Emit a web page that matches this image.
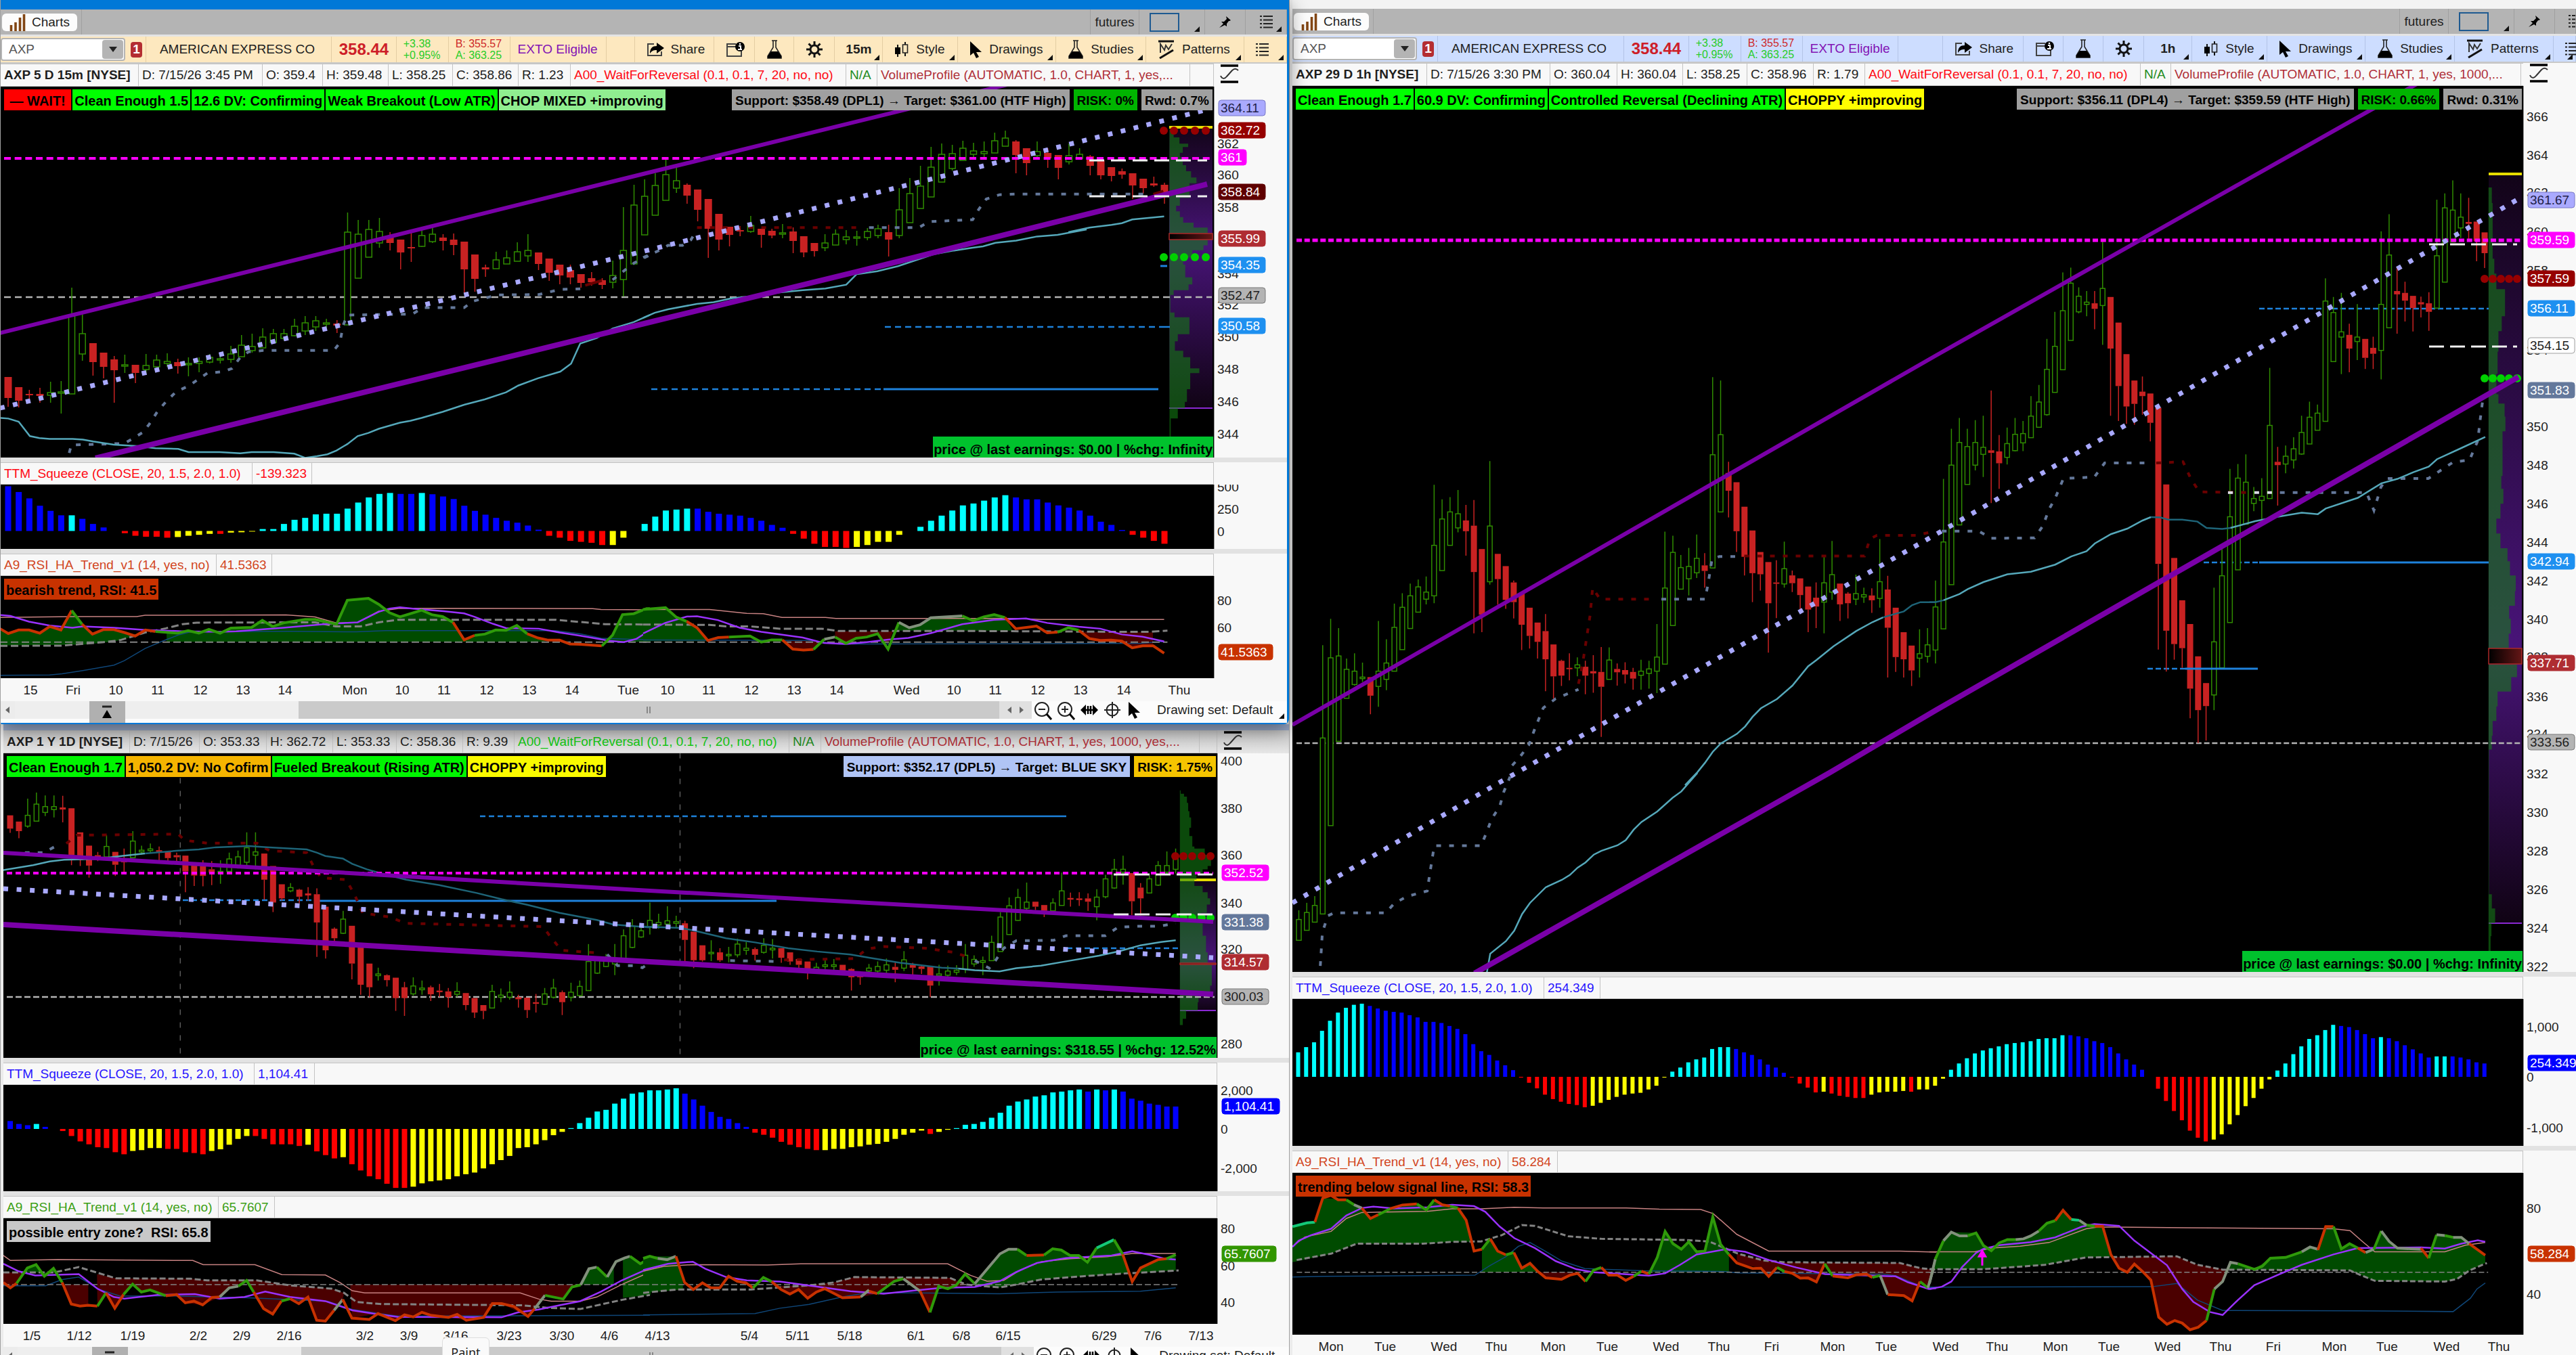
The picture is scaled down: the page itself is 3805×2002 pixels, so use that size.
<!DOCTYPE html>
<html lang="en">
<head>
<meta charset="utf-8">
<title>Charts</title>
<style>
  html, body { margin: 0; height: 100%; overflow: hidden; }
  body { font: 20px "Liberation Sans", Arial, sans-serif; color: #1e1e1e; background: #d9d9d9; }
  .desktop { display: grid; grid-template-columns: 1904fr 1901fr; grid-template-rows: 100%; height: 100%; overflow: hidden; }
  .stack { display: flex; flex-direction: column; min-width: 0; position: relative; z-index: 1; }
  .stack > * { flex: none; }
  chart-window.m15 { --axis: 108px; --tint: #fde8bf; --line: #e3cda3; --title: #0078d7; z-index: 1; border-right: 3px solid #0078d7; border-bottom: 2px solid #0078d7; border-radius: 0 0 8px 4px; box-shadow: 0 8px 28px rgba(0, 0, 0, .45); }
  chart-window.day { --axis: 106px; padding-left: 4px; }
  chart-window.h1 { --axis: 78px; --tint: #cdddff; --line: #b3c3e6; --title: #f3f3f3; padding-left: 4px; }
  .red { color: #ff0a14; }
  .green { color: #14c814; }
  .na { color: #228b22; }
  .brick { color: #b03038; }
  .blue { color: #2814ff; }
  .rust { color: #d2461e; }
  .leaf { color: #3ca014; }
</style>
</head>
<body>
<main class="desktop">
  <div class="stack">
    <chart-window class="m15" full>
      <quote-bar slot="bar" interval="15m" cols="215 274 96 77 91 142 42 118 60 58 60 71 111 145 133 145 63"></quote-bar>
      <study-head tall cols="204 183 89 97 95 97 77 407 46 462 35">
        <b>AXP 5 D 15m [NYSE]</b><span>D: 7/15/26 3:45 PM</span><span>O: 359.4</span><span>H: 359.48</span><span>L: 358.25</span><span>C: 358.86</span><span>R: 1.23</span><span class="red">A00_WaitForReversal (0.1, 0.1, 7, 20, no, no)</span><span class="na">N/A</span><span class="brick">VolumeProfile (AUTOMATIC, 1.0, CHART, 1, yes,...</span><span></span>
      </study-head>
      <plot-pane name="m15-price">
        <study-tag slot="start" color="#ff0000">&nbsp;— WAIT!&nbsp;</study-tag>
        <study-tag slot="start" color="#00ff00">Clean Enough 1.5</study-tag>
        <study-tag slot="start" color="#00ff00">12.6 DV: Confirming</study-tag>
        <study-tag slot="start" color="#00ff00">Weak Breakout (Low ATR)</study-tag>
        <study-tag slot="start" color="#90ee90">CHOP MIXED +improving</study-tag>
        <study-tag slot="end" color="#a0a0a0">Support: $358.49 (DPL1) → Target: $361.00 (HTF High)</study-tag>
        <study-tag slot="end" color="#00b400">RISK: 0%</study-tag>
        <study-tag slot="end" color="#a0a0a0">Rwd: 0.7%</study-tag>
        <study-tag slot="foot" color="#00c22d">price @ last earnings: $0.00 | %chg: Infinity</study-tag>
      </plot-pane>
      <study-head gap cols="372 88 1332"><span class="red">TTM_Squeeze (CLOSE, 20, 1.5, 2.0, 1.0)</span><span class="red">-139.323</span><span></span></study-head>
      <plot-pane name="m15-squeeze"></plot-pane>
      <study-head gap cols="319 82 1391"><span class="rust">A9_RSI_HA_Trend_v1 (14, yes, no)</span><span class="rust">41.5363</span><span></span></study-head>
      <plot-pane name="m15-rsi"><study-tag slot="start" color="#c83200">bearish trend, RSI: 41.5</study-tag></plot-pane>
      <time-axis name="m15"></time-axis>
      <scroll-strip></scroll-strip>
    </chart-window>

    <chart-window class="day">
      <study-head tall shade cols="187 103 99 98 94 98 76 406 47 559 26">
        <b>AXP 1 Y 1D [NYSE]</b><span>D: 7/15/26</span><span>O: 353.33</span><span>H: 362.72</span><span>L: 353.33</span><span>C: 358.36</span><span>R: 9.39</span><span class="green">A00_WaitForReversal (0.1, 0.1, 7, 20, no, no)</span><span class="na">N/A</span><span class="brick">VolumeProfile (AUTOMATIC, 1.0, CHART, 1, yes, 1000, yes,...</span><span></span>
      </study-head>
      <plot-pane name="day-price">
        <study-tag slot="start" color="#00f500">Clean Enough 1.7</study-tag>
        <study-tag slot="start" color="#f5b400">1,050.2 DV: No Cofirm</study-tag>
        <study-tag slot="start" color="#00f500">Fueled Breakout (Rising ATR)</study-tag>
        <study-tag slot="start" color="#fafa00">CHOPPY +improving</study-tag>
        <study-tag slot="end" color="#b0c4f5">Support: $352.17 (DPL5) → Target: BLUE SKY</study-tag>
        <study-tag slot="end" color="#f5c400">RISK: 1.75%</study-tag>
        <study-tag slot="foot" color="#00c22d">price @ last earnings: $318.55 | %chg: 12.52%</study-tag>
      </plot-pane>
      <study-head gap cols="371 89 1333"><span class="blue">TTM_Squeeze (CLOSE, 20, 1.5, 2.0, 1.0)</span><span class="blue">1,104.41</span><span></span></study-head>
      <plot-pane name="day-squeeze"></plot-pane>
      <study-head gap cols="318 83 1392"><span class="leaf">A9_RSI_HA_Trend_v1 (14, yes, no)</span><span class="leaf">65.7607</span><span></span></study-head>
      <plot-pane name="day-rsi"><study-tag slot="start" color="#c8c8c8">possible entry zone?&nbsp; RSI: 65.8</study-tag></plot-pane>
      <time-axis name="day"></time-axis>
      <scroll-strip hint="Paint"></scroll-strip>
    </chart-window>
  </div>

  <chart-window class="h1" full>
    <quote-bar slot="bar" interval="1h" cols="215 275 96 77 91 141 67 119 59 59 60 71 111 145 132 146 33"></quote-bar>
    <study-head tall cols="199 182 99 97 95 98 76 407 45 517 3">
      <b>AXP 29 D 1h [NYSE]</b><span>D: 7/15/26 3:30 PM</span><span>O: 360.04</span><span>H: 360.04</span><span>L: 358.25</span><span>C: 358.96</span><span>R: 1.79</span><span class="red">A00_WaitForReversal (0.1, 0.1, 7, 20, no, no)</span><span class="na">N/A</span><span class="brick">VolumeProfile (AUTOMATIC, 1.0, CHART, 1, yes, 1000,...</span><span></span>
    </study-head>
    <plot-pane name="h1-price">
      <study-tag slot="start" color="#00ff00">Clean Enough 1.7</study-tag>
      <study-tag slot="start" color="#00ff00">60.9 DV: Confirming</study-tag>
      <study-tag slot="start" color="#00ff00">Controlled Reversal (Declining ATR)</study-tag>
      <study-tag slot="start" color="#ffff00">CHOPPY +improving</study-tag>
      <study-tag slot="end" color="#a0a0a0">Support: $356.11 (DPL4) → Target: $359.59 (HTF High)</study-tag>
      <study-tag slot="end" color="#00b400">RISK: 0.66%</study-tag>
      <study-tag slot="end" color="#a0a0a0">Rwd: 0.31%</study-tag>
      <study-tag slot="foot" color="#00c22d">price @ last earnings: $0.00 | %chg: Infinity</study-tag>
    </plot-pane>
    <study-head gap cols="372 83 1363"><span class="blue">TTM_Squeeze (CLOSE, 20, 1.5, 2.0, 1.0)</span><span class="blue">254.349</span><span></span></study-head>
    <plot-pane name="h1-squeeze"></plot-pane>
    <study-head gap cols="319 73 1426"><span class="rust">A9_RSI_HA_Trend_v1 (14, yes, no)</span><span class="rust">58.284</span><span></span></study-head>
    <plot-pane name="h1-rsi"><study-tag slot="start" color="#c83200">trending below signal line, RSI: 58.3</study-tag></plot-pane>
    <time-axis name="h1"></time-axis>
  </chart-window>
</main>

<script>
const COLORS = {
  o: '#c83200', g: '#2f9a0a', s: '#82907c', t: '#14c878',
  b: '#0000ff', c: '#00ffff', r: '#ff0000', y: '#ffff00',
  purple: '#7a00a8', violet: '#9a32ff', lilac: '#a9a9ff', slate: '#64789a', maroon: '#690000',
  sea: '#55a8ba', teal: '#1e6478', sky: '#1e82dc', navy: '#0f4678', pink: '#c88282'
};

const icons = {
  share: '<svg width="26" height="24" viewBox="0 0 26 24"><path d="M11 4H2v17h20v-6" fill="none" stroke="#444" stroke-width="2"/><path d="M5 18c0-8 4-11 10-11V2l11 8-11 8v-5c-5 0-7 1-10 5z"/></svg>',
  info: '<svg width="28" height="24" viewBox="0 0 28 24"><path d="M15 4H2v18h21v-8M2 8h13" fill="none" stroke="#444" stroke-width="2"/><circle cx="21" cy="8" r="7"/><path d="M19 7h3v5M18 12h6" fill="none" stroke="#fff" stroke-width="2"/><circle cx="21" cy="4" r="1.3" fill="#fff"/></svg>',
  flask: '<svg width="24" height="28" viewBox="0 0 24 28"><path d="M8 1h8M10 1v10L2 24v3h20v-3L14 11V1" fill="none" stroke="#222" stroke-width="1.6"/><path d="M7 17h10l5 7v3H2v-3z"/></svg>',
  gear: '<svg width="26" height="26" viewBox="0 0 26 26"><circle cx="13" cy="13" r="6" fill="none" stroke="#111" stroke-width="3"/><path d="M13 1v5M13 20v5M1 13h5M20 13h5M4.500 4.500l3.500 3.500M18 18l3.500 3.500M4.500 21.500L8 18M18 8l3.500-3.500" stroke="#111" stroke-width="3"/></svg>',
  style: '<svg width="22" height="24" viewBox="0 0 22 24"><path d="M5 5v18M16 1v21" stroke="#111" stroke-width="2"/><path d="M1 9h8v10H1z"/><path d="M12.500 5h7v12h-7z" fill="var(--tint)" stroke="#222" stroke-width="1.600"/></svg>',
  cursor: '<svg width="19" height="25" viewBox="0 0 19 25"><path d="M1 0v21l5-4 4 8 4-2-4-7h8z"/></svg>',
  pattern: '<svg width="26" height="28" viewBox="0 0 26 28"><path d="M1 2h23" stroke="#111" stroke-width="3"/><path d="M4 19V6l6 9 2-7 4 6 5-8" fill="none" stroke="#333" stroke-width="2"/><path d="M3 27l20-12" stroke="#111" stroke-width="3"/></svg>',
  list: '<svg width="19" height="21" viewBox="0 0 19 21"><path d="M5 2h14M5 7.500h14M5 13h14M5 18.500h14" stroke="#222" stroke-width="2"/><path d="M0 2h3M0 7.500h3M0 13h3M0 18.500h3" stroke="#222" stroke-width="2"/></svg>',
  pin: '<svg width="17" height="17" viewBox="0 0 17 17"><path d="M10 0l7 6-2 1-1 0-3 4v4l-3-2-8 4 6-6-3-3 4 0 4-4z"/></svg>',
  wave: '<svg width="28" height="28" viewBox="0 0 28 28"><path d="M1 2h26M1 26h26" stroke="#000" stroke-width="3.500"/><path d="M1 17c2 5 6 5 9 1l8-9c3-3 6-3 9 0" fill="none" stroke="#333" stroke-width="2"/></svg>',
  minus: '<svg width="28" height="30" viewBox="0 0 28 30"><circle cx="12" cy="14" r="10" fill="none" stroke="#222" stroke-width="2"/><path d="M7 14h10" stroke="#222" stroke-width="2"/><path d="M19 21l7 8" stroke="#000" stroke-width="3"/></svg>',
  plus: '<svg width="28" height="30" viewBox="0 0 28 30"><circle cx="12" cy="14" r="10" fill="none" stroke="#222" stroke-width="2"/><path d="M7 14h10M12 9v10" stroke="#222" stroke-width="2"/><path d="M19 21l7 8" stroke="#000" stroke-width="3"/></svg>',
  fit: '<svg width="26" height="18" viewBox="0 0 26 18"><path d="M0 9l8-8v16zM26 9l-8-8v16z"/><path d="M6 9h14M11 3v12M15 3v12" stroke="#000" stroke-width="2.500"/></svg>',
  cross: '<svg width="24" height="24" viewBox="0 0 24 24"><circle cx="12" cy="12" r="8.500" fill="none" stroke="#222" stroke-width="2"/><path d="M12 0v24M0 12h24" stroke="#222" stroke-width="2"/></svg>',
  bars: '<svg width="24" height="26" viewBox="0 0 24 26"><path d="M2.500 26v-9M9 26V13M15.500 26V6M21.500 26V1" stroke="#824614" stroke-width="3.600"/></svg>'
};

// ---- drawing helpers -------------------------------------------------

const line = (color, width, points, dash = '') =>
  `<polyline points="${points}" stroke="${COLORS[color] || color}" stroke-width="${width}" stroke-dasharray="${dash}"/>`;

const fill = (color, points) => `<polygon points="${points}" fill="${color}"/>`;
const UP = '#004b00';
const DOWN = '#4b0000';

// a zone is a part of a plot with its own origin and scale
const zone = (x, y, kx, ky) => (...items) =>
  `<g transform="translate(${x} ${y}) scale(${kx} ${ky})">${items.join('')}</g>`;

// each bar is direction + high, body top, body bottom, low
function candles(x0, step, y0, k, width, data) {
  return data.trim().split(/\s+/).map((bar, i) => {
    const up = bar[0] === 'u';
    const [h, t, b, l] = bar.slice(1).split(',').map(v => y0 + v * k);
    const x = x0 + i * step;
    const color = up ? '#2f8c00' : '#c82222';
    const w = up ? width - 2 : width;
    return `<path d="M${x} ${h}V${t}M${x} ${b}V${l}" stroke="${color}" stroke-width="1.5"/>` +
      `<rect x="${x - w / 2}" y="${t}" width="${w}" height="${Math.max(b - t, 2)}" fill="${up ? '#000' : color}"` +
      (up ? ` stroke="${color}" stroke-width="1.5"/>` : '/>');
  }).join('');
}

function histogram(x0, step, zero, k, width, data) {
  let i = 0;
  return data.split('|').map(run => run.slice(1).split(',').map(v => {
    const h = Math.abs(v) * k;
    const x = x0 + step * i++ - width / 2;
    return `<rect x="${x}" y="${v > 0 ? zero - h : zero}" width="${width}" height="${h}" fill="${COLORS[run[0]]}"/>`;
  }).join('')).join('');
}

// "g 1,2 3,4|o 3,4 5,6": one stroke per colour run
const runs = (data, width) => data.split('|').map(r => line(r.trim()[0], width, r.trim().slice(2))).join('');

const dots = (color, y, xs) => xs.map(x => `<circle cx="${x}" cy="${y}" r="6" fill="${color}"/>`).join('');

// volume profile: steps are "y:right edge", drawn from the left base line
function profile(base, k, x0, y0, ky, end, data) {
  const X = v => x0 + v * k, Y = v => y0 + v * ky;
  const steps = data.split(' ').map(s => s.split(':').map(Number));
  let d = `M${X(base)} ${Y(steps[0][0])}`;
  steps.forEach(([y, x], i) => { d += `V${Y(y)}H${X(x)}V${Y(i + 1 < steps.length ? steps[i + 1][0] : end)}`; });
  return `<path d="${d}H${X(base)}z" fill="#148214" fill-opacity=".56"/>`;
}

const valueArea = (id, x, y, w, h, mid) =>
  `<linearGradient id="${id}" x1="0" y1="0" x2="0" y2="1"><stop offset="0" stop-color="#120418"/><stop offset="${mid}" stop-color="#481478"/><stop offset="1" stop-color="#100314"/></linearGradient>` +
  `<linearGradient id="${id}r"><stop offset="0" stop-color="#000"/><stop offset="1" stop-color="#641616"/></linearGradient>` +
  `<rect x="${x}" y="${y}" width="${w}" height="${h}" fill="url(#${id})"/>` +
  `<path d="M${x} ${y}h${w}" stroke="#e6dc00" stroke-width="4"/><path d="M${x} ${y + h}h${w}" stroke="#8a28d2" stroke-width="2"/>`;

const control = (id, x, y, w, h) =>
  `<rect x="${x}" y="${y}" width="${w}" height="${h}" fill="url(#${id}r)" stroke="#aa2828" stroke-width="1.500"/>`;

// ---- the three charts ------------------------------------------------

const a1 = zone(950, 0, .6122, .33333);
const a2 = zone(0, 340, .6122, .4719);
const a3 = zone(950, 340, .6122, .4719);
const b1 = zone(0, 1040, .6122, .6135);
const b2 = zone(950, 1040, .6122, .6135);
const c1 = zone(1900, 300, .6122, .5485);
const c2 = zone(2850, 300, .609, .5485);
const c3 = zone(1900, 1142, .6122, .5485);
const c4 = zone(2850, 1142, .609, .5485);

const DOT = '7 12';

const panes = {
  'm15-price': {
    box: [1, 129, 1792, 548],
    draw: () =>
      valueArea('va', 1727, 189, 64, 415, .42) +
      profile(1270, .6122, 950, 0, .33333, 1038, '575:1280 612:1294 640:1315 655:1302 680:1295 700:1310 715:1302 735:1310 762:1322 790:1335 815:1318 880:1295 915:1286 940:1295 965:1303 990:1328 1012:1362') +
      profile(1270, .6122, 950, 340, .4719, 650, '32:1362 50:1352 65:1325 88:1303 110:1308 150:1325 172:1316 190:1280 205:1272 260:1282 275:1318 328:1290 350:1283 380:1303 400:1320 435:1342 450:1320 500:1312 540:1307 560:1290 592:1273') +
      control('va', 1727, 346, 64, 9) +
      line('#b4b4b4', 2.500, '6,440 1790,440', '10 6') +
      line('sky', 2.500, '1307,484 1712,484', '9 6') + line('sky', 2.500, '1712,484 1728,484') +
      line('sky', 2.500, '962,576 1305,576', '9 6') + line('sky', 3, '1305,576 1711,576') + line('sky', 3, '1714,394 1724,394') +
      candles(12, 15.67, 0, 1, 11, `
        d558,558,589,602 d573,573,593,603 d577,583,585,591 d574,583,586,596 u565,581,585,596 u564,580,582,612 u426,466,583,583 u466,494,524,534 d508,508,536,556 d522,522,543,560
        d527,532,548,596 u525,540,541,552 d540,540,552,567 u524,541,547,552 u525,533,543,548 u523,535,538,543 d531,536,542,553 u529,538,540,557 u529,535,538,551 u524,529,536,538
        u522,531,532,538 u512,524,532,537 u496,511,528,528 u494,513,519,522 u486,499,515,515 u487,494,507,507 u487,494,501,504 u472,483,497,498 u468,478,490,496 u468,475,484,490
        u472,478,480,489 d474,479,482,493 u315,344,481,481 u326,347,412,412 u326,340,381,381 u323,343,360,367 d344,350,360,371 d355,355,374,399 d344,366,367,388 u340,349,365,366
        u337,347,358,360 d347,352,357,371 d346,355,363,378 d358,358,399,434 d377,377,413,432 d392,396,399,410 u373,385,398,398 u371,382,391,391 u359,373,387,387 u347,371,379,388
        d374,374,391,400 d383,383,404,416 d392,392,408,421 d392,400,411,421 d406,406,419,426 d403,412,418,423 d412,415,422,428 u386,408,418,427 u307,371,414,439 u274,304,391,391
        u266,291,348,348 u257,275,319,319 u237,259,297,297 u247,268,279,286 d272,274,290,302 d281,281,311,328 d295,295,339,382 d317,317,355,371 d336,336,348,365 d335,341,343,350
        u320,334,343,345 d339,339,348,367 d339,342,349,353 u332,345,347,353 d337,343,357,375 d350,350,374,381 d360,360,372,380 u347,360,367,372 u340,347,363,363 u341,351,355,362
        u342,351,353,364 u338,343,352,356 u333,339,349,353 d333,344,355,380 u279,311,349,353 u264,287,330,330 u246,276,309,309 u218,248,292,292 u213,229,270,270 u215,228,250,253
        u209,220,238,238 u212,224,229,235 u210,225,228,237 u197,209,227,227 u194,205,217,217 d208,210,230,257 d220,220,242,260 u210,225,231,235 d220,227,235,249 d230,230,249,266
        u213,231,240,244 u220,229,235,235 d230,232,246,260 d238,238,260,266 d248,248,261,269 d250,254,259,265 d257,257,275,295 d265,265,279,287 d262,272,275,277 d271,274,287,302`) +
      a2(
        line('slate', 4, '167,700 172,675 300,670 320,655 345,635 360,610 380,570 400,540 425,508 455,490 500,450 540,445 560,435 580,400 600,383 635,379 805,379 820,355 828,300 838,268 995,265 1020,245 1120,245 1140,225 1200,205 1300,204 1350,188 1400,186', DOT),
        line('maroon', 4, '1412,175 1452,160'),
        line('slate', 4, '1478,158 1505,130 1530,105 1568,80', DOT),
        line('sea', 2.500, '0,590 20,592 45,602 72,647 95,653 120,656 175,656 200,658 225,664 275,674 330,678 375,685 430,687 455,697 530,697 580,701 607,697 660,697 710,702 736,715 765,710 790,704 812,692 838,672 863,647 889,637 914,624 965,605 990,599 1017,590 1068,571 1120,549 1170,532 1221,510 1250,489 1298,466 1352,445 1378,420 1400,357 1440,340 1478,310 1529,290 1568,268')) +
      a3(
        line('slate', 4, '0,88 40,65 60,50 95,50 115,33 130,0', DOT),
        line('sea', 2.500, '0,277 28,261 60,250 130,233 170,228 215,215 260,210 330,197 385,190 440,185 490,173 515,140 565,131 615,115 700,78 750,66 795,57 820,53 850,42 900,35 950,22 1000,17 1070,0')) +
      a1(
        line('maroon', 4, '130,1012 530,1012', DOT),
        line('slate', 4, '545,1012 665,1012 690,985 795,977 810,930 828,885 860,866 900,863 1215,863', DOT),
        line('maroon', 4, '1231,864 1255,850'),
        line('sea', 2.500, '1026,1032 1077,1012 1130,1000 1155,992 1180,976 1257,962')) +
      line('#ff00ff', 4, '6,235 1790,235', '10 5.670') +
      line('purple', 6, '0,493 950,258 1488,126') +
      line('purple', 8, '141,678 960,477 1300,394 1783,273') +
      line('lilac', 7, '0,604 960,370 1783,163', '7 12.600') +
      line('#f0f0f0', 3, '1609,238 1783,238', '22 10') + line('#f0f0f0', 3, '1609,291 1783,291', '22 10') +
      dots('#960000', 194, [1719, 1734, 1749, 1765, 1781]) + dots('#00d200', 381, [1719, 1734, 1749, 1765, 1781]),
    ticks: [['362', 213], ['360', 259], ['358', 307], ['354', 405], ['352', 451], ['350', 498], ['348', 546], ['346', 594], ['344', 642]],
    pills: [['364.11', 160, '#aaaaff', '#1e1e46', '#7878c8'], ['362.72', 193, '#960000'], ['361', 233, '#ff00ff'], ['358.84', 284, '#5f0000'], ['355.99', 353, '#af2d32'], ['354.35', 392, '#1e90f0'], ['352.47', 437, '#b4b4b4', '#1e1e1e', '#787878'], ['350.58', 482, '#1e90f0']]
  },
  'm15-squeeze': {
    box: [1, 717, 1792, 95],
    draw: () => histogram(12, 15.67, 785.500, .4719, 9, 'b140,122,102,79,63,49|c49|b38,22,11,0|r-7,-15,-18,-18,-21|y-19,-15,-12,-9|r-9|y-5,-4,-2|c6,6,22,35,41,52,54,54,70,89,105,116,119|b116,116|c119|b115,108,100,79,63,51,41,32,26,17,4|r-15,-21,-31,-34,-37,-44|y-44,-21,0|c22,45,64,67,70|b70,60,54,51,48,41,32,19,10|r-9,-24,-40,-50,-50,-53|y-50,-44,-34,-34,-12,0|c13,32,48,64,80,86,95,105,112|b105,99,99,89,80,73,64,48,29,19,3|r-12,-21,-31,-40'),
    ticks: [['500', 720], ['250', 753], ['0', 786]], pills: []
  },
  'm15-rsi': {
    box: [1, 852, 1792, 151],
    draw: () =>
      a2(
        fill(UP, '0,1250 20,1265 45,1254 70,1254 96,1264 120,1243 147,1254 173,1193 198,1236 223,1267 249,1253 275,1253 300,1262 326,1273 275,1290 200,1300 0,1303'),
        fill(UP, '402,1262 429,1264 454,1256 480,1264 504,1252 531,1264 557,1248 607,1246 633,1224 658,1243 684,1232 736,1221 761,1221 812,1236 838,1161 889,1155 914,1174 940,1200 965,1213 1017,1192 1042,1206 1068,1212 1093,1230 1120,1285 1120,1291 402,1291'),
        fill(UP, '1120,1285 1145,1271 1196,1254 1221,1255 1247,1240 1272,1266 1298,1279 1323,1286 1310,1291 1120,1291'),
        fill(UP, '1465,1291 1478,1270 1502,1206 1529,1203 1560,1187 1570,1187 1570,1291'),
        line('pink', 1.500, '0,1215 180,1212 330,1212 350,1208 690,1207 760,1213 812,1232 863,1230 914,1195 965,1186 1430,1187 1450,1190 1568,1191'),
        line('navy', 1.500, '0,1396 120,1395 150,1391 200,1381 275,1364 300,1350 350,1312 390,1290 430,1270 460,1260 700,1258 860,1260 930,1256 1340,1256 1400,1266 1450,1280 1568,1285'),
        line('#828282', 3, '0,1304 150,1303 250,1292 290,1286 350,1262 400,1249 440,1236 475,1231 760,1230 810,1243 870,1243 914,1230 960,1222 1340,1222 1400,1229 1460,1236 1568,1237', '11 5'),
        line('#828282', 2, '0,1292 1568,1292', '11 5'),
        line('violet', 2.500, '0,1207 25,1210 70,1228 120,1240 175,1247 200,1243 275,1247 350,1254 440,1258 530,1260 570,1258 684,1247 790,1235 863,1230 914,1197 940,1187 965,1183 1000,1188 1070,1195 1120,1202 1145,1213 1190,1235 1221,1248 1300,1250 1350,1262 1400,1272 1470,1288 1505,1292 1535,1282 1568,1255'),
        runs('o 0,1250 20,1265 45,1254 70,1254 96,1264 120,1243 147,1254 173,1193|g 173,1193 198,1236|o 198,1236 223,1267 249,1253 275,1253 300,1262 326,1273 351,1254 375,1259|g 375,1259 429,1264 454,1256 480,1264 504,1252 531,1264 557,1248 607,1246 633,1224 658,1243 684,1232 736,1221 761,1221 812,1236 838,1161 889,1155 914,1174 940,1200 965,1213 1017,1192 1042,1206 1068,1212 1093,1230|o 1093,1230 1120,1285 1145,1271|g 1145,1271 1170,1267 1196,1254 1221,1255 1247,1240 1272,1266|o 1272,1266 1298,1279 1323,1286 1350,1286 1375,1298 1401,1299 1452,1304|g 1452,1304 1478,1270 1502,1206 1529,1203 1560,1187 1568,1187', 4)) +
      a3(
        fill(UP, '0,1190 54,1184 80,1214 105,1227 130,1247 156,1289 0,1289'),
        fill(DOWN, '340,1289 361,1314 387,1317 411,1315 435,1289'),
        fill(DOWN, '463,1258 603,1258 591,1300 566,1268 540,1278 514,1282 489,1296 463,1276'),
        fill(UP, '617,1230 642,1247 668,1238 694,1216 770,1210 796,1225 822,1213 847,1206 873,1215 892,1256 612,1256'),
        fill(DOWN, '1055,1260 1230,1262 1230,1302 1205,1304 1180,1310 1155,1289 1103,1287 1077,1281'),
        line('pink', 1.500, '0,1190 160,1190 250,1202 290,1203 335,1215 440,1215 465,1218 900,1218 960,1221 1257,1221'),
        line('navy', 1.500, '0,1285 400,1287 470,1298 1200,1296 1257,1290'),
        line('#828282', 3, '0,1237 160,1238 200,1243 260,1243 330,1250 430,1250 470,1257 770,1257 1170,1260 1220,1260 1265,1256', '11 5'),
        line('#828282', 2, '0,1292 1265,1292', '11 5'),
        line('violet', 2.500, '0,1265 53,1232 105,1212 130,1211 180,1223 233,1247 285,1260 335,1269 385,1278 437,1295 489,1298 540,1292 591,1284 640,1279 694,1264 770,1236 847,1222 924,1218 975,1232 1051,1244 1103,1250 1155,1268 1205,1275 1257,1290'),
        runs('g 0,1190 54,1184 80,1214 105,1227|o 105,1227 130,1247 156,1287 181,1278 207,1276|g 207,1276 258,1273 285,1292 310,1285 336,1285|o 336,1285 361,1314 387,1317 411,1315|g 411,1315 437,1283|s 437,1283 463,1276|g 463,1276 489,1296 514,1280 540,1276 566,1266 591,1314 617,1230|s 617,1230 642,1247 668,1238 694,1216 770,1210|g 770,1210 796,1225 822,1213 847,1206 873,1215|o 873,1215 899,1250 949,1242 975,1263 1000,1261|g 1000,1261 1026,1247 1051,1255|o 1051,1255 1077,1281 1103,1287 1129,1286 1155,1289 1180,1310 1205,1304 1231,1304 1257,1327', 4)),
    ticks: [['80', 888], ['60', 928]], pills: [['41.5363', 964, '#c83200']]
  },

  'day-price': {
    box: [5, 1114, 1793, 450],
    draw: () =>
      valueArea('vb', 1743, 1301, 53, 193, .62) +
      profile(1295, .6122, 950, 1040, .6135, 775, '210:1297 218:1305 225:1312 240:1315 260:1318 275:1322 300:1318 320:1325 345:1330 350:1355 365:1370 385:1370 392:1362 400:1350 410:1335 425:1330 440:1350 455:1362 470:1368 485:1360 505:1345 530:1350 560:1358 600:1362 630:1372 660:1372 680:1368 700:1340 720:1338 740:1310 760:1302') +
      control('vb', 1743, 1424, 53, 2) +
      b1(line('#5a5a5a', 1.500, '435,180 435,854', '8 11')) + b2(line('#5a5a5a', 1.500, '89,120 89,854', '8 11')) +
      line('#b4b4b4', 2.500, '10,1474 1794,1474', '9 4') +
      line('sky', 2.500, '709,1207 1146,1207', '8 5') + line('sky', 2.500, '1146,1207 1575,1207') +
      line('sky', 2.500, '270,1331 472,1331', '8 5') + line('sky', 3, '472,1332 1147,1332') +
      line('sky', 2.500, '1576,1402 1742,1402', '8 5') +
      candles(15, 12.944, 1040, .6135, 9, `
        d270,270,302,312 d285,285,308,325 u230,270,296,300 u215,243,284,284 u222,249,263,272 u222,249,256,275 d223,251,256,287 d253,253,366,390 d311,311,378,392 d343,343,391,420
        d358,366,378,380 u318,345,370,376 d358,358,389,416 d350,380,383,410 u308,332,372,372 u343,354,358,365 u338,351,355,362 d345,354,358,378 d358,358,373,383 d360,366,371,383
        d367,367,405,455 d388,388,415,440 d378,392,416,441 d380,400,408,438 u378,405,410,435 u360,375,405,412 u355,370,390,398 u311,348,383,390 u311,358,366,400 d362,362,425,473
        d392,392,480,503 d436,436,470,475 u433,444,452,455 d447,449,466,482 d443,458,463,475 d446,460,528,611 d490,490,595,615 d540,543,566,575 u500,520,554,556 d536,536,627,665
        d586,586,678,702 d627,627,684,708 u637,652,656,668 d653,655,667,682 d661,661,710,741 d671,684,710,753 u660,681,700,704 u668,686,690,702 d680,684,701,717 d676,692,696,708
        d686,694,708,733 u672,694,701,708 d698,698,727,739 d710,710,745,758 d727,727,741,761 u678,694,734,735 u687,703,708,720 u670,696,708,714 d702,708,713,733 d709,709,739,758
        d700,720,724,745 u686,700,725,726 u664,686,708,711 d692,696,720,751 u673,696,708,718 u668,682,704,706 u580,622,692,692 u612,614,650,652 u604,616,634,635 u580,614,628,655
        u545,560,615,616 u520,537,588,590 u530,548,563,565 u480,523,540,557 u507,528,534,543 u489,524,532,540 u512,526,530,540 d524,530,570,621 d550,550,619,638 d583,583,619,622
        u571,600,603,621 d590,600,619,623 u587,605,608,624 u567,580,606,612 u575,590,595,606 d588,592,606,620 u566,583,600,603 u568,590,594,615 d590,590,613,625 d600,600,622,630
        d616,616,630,640 d622,622,640,665 u625,636,641,646 u618,630,634,640 u616,630,634,645 d630,630,645,652 d638,640,660,692 d650,655,660,678 u628,638,645,650 u622,634,645,652
        u615,630,643,650 d623,635,642,672 u597,618,638,645 d625,630,637,658 d630,634,640,652 d633,633,680,708 u630,652,656,680 u632,645,655,662 u631,643,648,655 u580,607,641,650
        u607,617,628,635 u610,620,624,655 u560,576,620,621 u503,515,598,598 u468,488,557,558 u447,468,523,524 u432,479,494,500 d478,478,490,498 d486,486,500,515 u470,481,500,503
        u408,452,487,487 d456,469,473,490 d455,470,474,488 d458,470,478,500 u448,467,490,523 u413,423,466,470 u375,400,445,447 u367,400,407,437 d409,409,477,510 d433,444,470,511
        u415,423,457,458 u380,391,438,440 u357,391,407,412 u350,371,400,410`) +
      b1(
        line('slate', 4, '60,360 105,360 135,344', DOT),
        line('maroon', 4, '160,338 185,318 430,315 445,330 500,337 620,337 650,355 740,360 760,400 775,420 835,425 855,460 875,505 940,515 980,530 1100,533 1310,538 1330,565 1355,595 1450,602', DOT),
        line('slate', 4, '1465,605 1490,632 1530,632 1550,637 1568,625', DOT),
        line('sea', 2.500, '8,402 80,390 120,381 155,377 235,375 300,367 350,362'),
        line('teal', 2.500, '350,362 430,355 480,352 520,347 600,344 650,347 740,352 765,360 785,368 827,374 850,387 885,400 920,410 980,425 1060,438 1150,457 1210,472 1270,485 1350,505 1440,522 1480,533 1568,540')) +
      b2(
        line('slate', 4, '210,620 330,622', DOT),
        line('maroon', 4, '340,618 510,615 540,592 580,586 680,590 750,600 780,610', DOT),
        line('slate', 4, '800,620 835,638 850,620 870,590 900,572 990,571 1020,560 1115,560 1145,540 1190,537 1245,537 1285,530', DOT),
        line('teal', 2.500, '0,538 90,541 120,547 200,566 270,576 350,590 420,598 500,605 545,613 620,625 720,637 760,639'),
        line('sea', 2.500, '760,639 800,643 860,646 900,638 960,632 1030,620 1100,608 1150,597 1200,583 1250,575 1285,571')) +
      dots('#00d200', 1357, [1736, 1748, 1761, 1775, 1788]) +
      line('#ff00ff', 4, '10,1291 1792,1291', '8 5') +
      line('purple', 6, '5,1261 960,1317 1792,1363') + line('purple', 8, '5,1367 960,1422 1792,1470') +
      line('lilac', 7, '5,1314 960,1369 1792,1416', '7 12.600') +
      line('#f0f0f0', 3, '1645,1293 1792,1293', '22 9') + line('#f0f0f0', 3, '1645,1352 1792,1352', '22 9') +
      dots('#960000', 1266, [1736, 1748, 1761, 1775, 1788]),
    ticks: [['400', 1125], ['380', 1195], ['360', 1264], ['340', 1335], ['320', 1403], ['280', 1543]],
    pills: [['352.52', 1290, '#ff00ff'], ['331.38', 1363, '#64789b'], ['314.57', 1422, '#af2d32'], ['300.03', 1473, '#b4b4b4', '#1e1e1e', '#787878']]
  },
  'day-squeeze': {
    box: [5, 1604, 1793, 157],
    draw: () => histogram(15, 12.944, 1669, .6135, 8, 'b19,12,9|c12|b5,0|r-5,-17,-30,-37,-44,-46,-56,-61|y-53,-51,-46,-46|r-48,-48,-56,-58,-61|y-53,-49,-38,-24,-17|r-17,-24,-37,-37,-37,-41|y-38|r-54,-63,-71|y-68|r-85,-100,-114,-121,-132,-142,-142|y-139,-131,-126,-124,-121,-114,-109,-105,-95,-85,-75,-65,-46,-44,-37,-27,-15,-7|c2,14,27,42,46,61,73,85,88,93,93,95,98|b85,71,56,41,29,24,14,5|r-9,-14,-21,-31,-38,-44,-48,-51|y-51,-48,-48,-44,-42,-38,-36,-31,-24,-14,-9,-4|r-12|y-7,-2|c2,10,12,17,27,39,56,66,71,78,81,88,90,93,95|b90|c95|b93|c95|b90,73,68,61,58,54,54'),
    ticks: [['2,000', 1612], ['0', 1669], ['-2,000', 1727]], pills: [['1,104.41', 1635, '#0000ff']]
  },
  'day-rsi': {
    box: [5, 1801, 1793, 156],
    draw: () =>
      b1(
        fill(DOWN, '8,1371 55,1371 40,1397 25,1408 8,1395'),
        fill(UP, '60,1371 66,1360 87,1352 107,1380 129,1361 136,1371'),
        fill(DOWN, '152,1400 213,1400 213,1450 193,1452 172,1447'),
        fill(DOWN, '234,1375 280,1385 460,1386 500,1390 620,1390 700,1402 800,1410 830,1420 827,1436 806,1462 785,1488 764,1486 743,1430 721,1446 700,1434 679,1440 658,1471 636,1458 612,1418 595,1390 553,1408 530,1430 489,1449 447,1444 426,1424 400,1427 362,1413 341,1418 320,1399 298,1424 277,1457 256,1420 235,1452'),
        fill(DOWN, '845,1400 1401,1400 1380,1406 1359,1435 1315,1426 1274,1477 1210,1446 1188,1446 1167,1479 1125,1486 1018,1467 954,1487 912,1470 849,1481'),
        fill(UP, '1401,1400 1421,1362 1440,1358 1465,1382 1481,1352 1481,1400'),
        fill(UP, '1503,1337 1520,1332 1545,1350 1570,1336 1570,1425 1503,1432'),
        line('pink', 1.500, '8,1330 25,1342 140,1340 465,1342 490,1352 615,1352 680,1376 785,1377 820,1395 850,1415 880,1420 1255,1420 1300,1435 1330,1440 1400,1440 1440,1430 1500,1400 1568,1370'),
        line('navy', 1.500, '8,1403 110,1403 150,1388 190,1382 240,1412 290,1428 400,1427 600,1432 790,1440 850,1460 930,1472 960,1476 1568,1474'),
        line('#828282', 3, '8,1371 130,1371 190,1358 230,1370 280,1385 460,1386 500,1390 620,1390 700,1402 800,1410 830,1420 860,1442 920,1447 1260,1450 1320,1456 1400,1459 1450,1448 1500,1437 1568,1425', '9 4'),
        line('#828282', 1.500, '8,1400 1568,1400', '9 4'),
        line('violet', 2.500, '8,1350 45,1368 85,1378 190,1375 235,1410 275,1430 300,1434 380,1425 470,1423 530,1434 590,1430 640,1417 700,1430 785,1440 850,1462 900,1470 960,1478 1210,1479 1250,1467 1300,1460 1350,1450 1400,1440 1450,1417 1500,1390 1568,1360'),
        runs('o 8,1395 25,1408 40,1397|g 40,1397 66,1360 87,1352 107,1380 129,1361 150,1395|o 150,1395 172,1447 193,1452 213,1450 235,1452|g 235,1452 256,1420|o 256,1420 277,1457 298,1424|g 298,1424 320,1399 341,1418 362,1413 400,1427|o 400,1427 426,1424 447,1444 468,1440 489,1449 511,1431 530,1430|s 530,1430 553,1408 575,1404|g 575,1404 595,1390 612,1418|o 612,1418 636,1458 658,1471 679,1440|g 679,1440 700,1434|o 700,1434 721,1446 743,1430 764,1486 785,1488 806,1462|s 806,1462 827,1436|o 827,1436 849,1481 891,1484 912,1470 954,1487 976,1473 997,1478 1018,1467 1040,1474 1082,1479 1103,1472 1125,1486 1167,1479 1188,1446 1210,1446 1240,1453 1274,1477 1290,1458|s 1290,1458 1315,1426|g 1315,1426 1359,1435 1380,1406 1401,1401|s 1401,1401 1421,1362 1440,1358|g 1440,1358 1465,1382|s 1465,1382 1486,1345 1507,1336 1520,1332|g 1520,1332 1545,1350 1568,1336', 4)) +
      b2(
        fill(UP, '0,1337 16,1332 79,1332 96,1385 96,1412 0,1420'),
        fill(DOWN, '330,1404 400,1402 460,1395 510,1382 740,1384 780,1400 735,1410 713,1408 692,1467 668,1416 628,1386 606,1392 565,1422 525,1430 481,1432 438,1410 397,1433 375,1412 354,1423'),
        fill(UP, '820,1375 861,1326 882,1315 903,1315 925,1330 967,1329 988,1314 1009,1317 1030,1330 1051,1330 1072,1346 1094,1312 1136,1292 1157,1327 1172,1372 1060,1380 960,1388 900,1400 860,1407 800,1400'),
        fill(UP, '1190,1372 1200,1360 1242,1340 1285,1328 1285,1366'),
        line('pink', 1.500, '0,1368 50,1356 120,1352 300,1353 380,1350 735,1350 790,1378 830,1392 870,1390 910,1365 960,1345 1030,1338 1120,1333 1180,1325 1285,1325'),
        line('navy', 1.500, '0,1473 270,1470 330,1457 400,1448 480,1430 540,1420 660,1420 860,1422 1000,1418 1200,1416 1285,1408'),
        line('#828282', 3, '0,1420 80,1412 260,1412 400,1402 460,1395 510,1382 740,1384 780,1400 860,1407 900,1400 960,1388 1060,1380 1150,1374 1292,1366', '9 4'),
        line('#828282', 1.500, '0,1400 1292,1400', '9 4'),
        line('violet', 2.500, '0,1365 60,1350 120,1345 150,1362 200,1382 250,1390 330,1393 420,1405 500,1416 580,1422 650,1415 720,1408 800,1406 860,1392 900,1370 950,1348 1020,1336 1130,1330 1180,1320 1220,1328 1260,1338 1285,1340'),
        runs('g 0,1337 16,1332 35,1337|s 35,1337 58,1340 79,1332|o 79,1332 100,1395 121,1412 143,1396 163,1408 185,1408 206,1380 227,1392 248,1396 265,1408|g 265,1408 290,1383 310,1393|o 310,1393 333,1412 354,1423 375,1412 397,1433 418,1418 438,1410 481,1432 525,1430|s 525,1430 545,1413|o 545,1416 565,1422|g 565,1422 606,1392 628,1386|s 628,1386 668,1416|o 668,1416 692,1467|g 692,1467 713,1404 735,1410 755,1402 777,1375 800,1398|s 800,1398 861,1326 882,1315 903,1315|g 903,1315 925,1330|o 925,1330 967,1329|g 967,1329 988,1314 1009,1317 1030,1330 1051,1330 1072,1346 1094,1312|t 1094,1312 1136,1292|g 1136,1292 1157,1327|o 1157,1327 1180,1393 1200,1360 1242,1340 1263,1338|g 1263,1338 1285,1328', 4)),
    ticks: [['80', 1816], ['60', 1871], ['40', 1925]], pills: [['65.7607', 1853, '#329600']]
  },

  'h1-price': {
    box: [1909, 127, 1818, 1309],
    draw: () =>
      valueArea('vc', 3676, 257, 49, 1107, .63) +
      profile(1356, .609, 2850, 300, .5485, 1200, '-42:1364 0:1366 150:1370 190:1375 232:1396 305:1388 345:1380 400:1378 460:1375 515:1380 540:1395 575:1397 615:1390 735:1387 770:1392 810:1385 850:1375 890:1385 930:1402 965:1408 1003:1422 1045:1420 1085:1406 1120:1410 1160:1405') +
      profile(1356, .609, 2850, 300, .5485, 2015, '1243:1425 1277:1411 1316:1378 1356:1375 1395:1366 1435:1364 1472:1357 1862:1364 1900:1372 1940:1363 1975:1361') +
      control('vc', 3676, 958, 49, 23) +
      line('#b4b4b4', 2.500, '1915,1098 3723,1098', '8 3.760') +
      line('sky', 2.500, '3337,456 3676,456', '8 4') +
      line('sky', 2.500, '3255,831 3337,831', '8 4') + line('sky', 3, '3337,831 3676,831') +
      line('sky', 2.500, '3172,988 3228,988', '8 4') +
      candles(1918.500, 11.755, 300, .5485, 9, `
        u1905,1930,1986,1986 u1885,1911,1959,1959 u1867,1892,1937,1937 u1191,1441,1915,1915 u1120,1225,1677,1677 u1145,1220,1450,1450 u1227,1256,1334,1334 u1213,1261,1297,1300 u1238,1277,1281,1290 d1277,1277,1327,1377
        u1126,1261,1302,1357 u1175,1239,1283,1312 u1079,1143,1261,1261 u1051,1089,1203,1203 u1025,1058,1146,1146 u1014,1034,1102,1102 u1006,1048,1067,1081 u759,922,1058,1078 u798,851,990,990 u792,832,922,922
        u773,837,875,887 d813,855,884,950 d800,869,994,1159 d932,932,1109,1156 u695,870,1020,1028 d945,945,1013,1082 d978,978,1069,1093 d1017,1022,1075,1119 d1051,1051,1136,1204 d1090,1090,1166,1200
        d1130,1130,1182,1227 d1107,1153,1229,1315 d1189,1189,1275,1335 d1230,1233,1273,1301 d1213,1252,1255,1286 u1224,1244,1252,1275 d1233,1249,1273,1323 d1218,1261,1267,1319 d1196,1263,1303,1438 u1197,1231,1283,1283
        d1240,1255,1264,1300 d1237,1258,1270,1294 d1252,1263,1281,1311 u1230,1261,1272,1311 u1233,1255,1267,1308 u1134,1223,1261,1320 u885,1037,1242,1242 u896,941,1138,1138 u948,982,1040,1040 u929,979,1012,1057
        u893,957,996,1010 d943,976,991,1036 u469,678,983,983 u478,624,832,832 d697,727,775,847 d752,752,884,940 d818,818,953,1003 d882,882,997,1075 d940,940,1000,1044 d967,967,1078,1211
        d962,1022,1025,1118 u912,985,1026,1036 d990,1003,1024,1048 d1011,1011,1056,1095 d1033,1033,1095,1156 d1022,1063,1087,1145 u948,1023,1075,1159 u910,1001,1048,1069 d1025,1025,1081,1126 d1048,1052,1078,1119
        u1001,1052,1067,1083 u1036,1055,1061,1077 d1038,1057,1070,1104 u905,1020,1065,1090 d1004,1041,1144,1278 d1090,1090,1223,1263 d1156,1156,1229,1278 d1192,1192,1259,1301 u1148,1214,1226,1278 u1145,1190,1221,1238
        u1017,1088,1204,1240 u743,913,1147,1147 u608,706,1028,1028 u579,645,867,867 u608,656,758,758 u585,645,706,720 u573,658,677,738 d505,666,673,808 d625,669,701,770 u605,648,685,704
        u579,623,667,669 u587,621,646,668 u520,574,632,632 u490,536,604,604 u366,448,570,573 u293,386,510,510 u187,290,449,449 u174,216,370,370 u227,251,293,297 u237,267,273,305
        d237,270,285,340 u102,230,276,382 d253,253,392,573 d322,322,493,587 d407,407,548,595 d478,478,541,597 d467,508,520,570 d513,513,592,642 d551,551,972,1203 d758,758,1152,1262
        d956,956,1188,1230 d1070,1070,1199,1252 d1134,1134,1308,1388 d1221,1221,1366,1455 d1293,1293,1355,1448 u1036,1182,1325,1366 u930,1004,1252,1252 u716,845,1130,1130 u703,741,988,988 u677,752,865,865
        u765,796,809,830 u741,790,801,853 u444,599,796,796 d657,697,706,815 u653,682,703,728 u631,662,692,715 u573,618,676,678 u535,577,649,649 u543,566,612,612 u203,264,588,588
        u253,295,427,427 u242,347,361,461 d325,355,392,456 u272,361,373,423 d366,366,417,447 d360,390,406,447 u76,273,397,475 u30,140,336,336 d175,237,246,352 d212,242,263,319
        d250,250,283,346 d252,267,273,308 d240,270,293,344 u-9,142,283,283 u-26,13,213,213 u-61,19,105,105 u-26,38,67,94 d-14,51,56,97 d50,50,103,157 d79,79,135,175`) +
      line('sky', 3, '3228,988 3335,988') +
      c3(
        line('slate', 4, '82,520 87,430 100,385 115,377 240,377 260,352 290,333 340,318 345,280 357,196 470,196 485,155 495,125 515,90 525,50 540,10', DOT),
        line('sea', 2.500, '484,537 492,487 530,453 550,425 569,380 588,350 626,308 665,288 684,275 703,255 722,241 742,220 760,210 799,195 819,181 838,153 857,132 895,104 932,67 953,50 992,0')) +
      c1(
        line('slate', 4, '545,1515 565,1490 585,1460 600,1415 620,1360 650,1335 705,1310', DOT),
        line('maroon', 4, '705,1295 715,1240 722,1190 733,1110 739,1037 757,1067 880,1067', DOT),
        line('slate', 4, '905,1067 1010,1067 1017,1030 1027,960 1045,952 1085,952', DOT),
        line('maroon', 4, '1105,951 1395,951 1408,905 1425,895 1520,895 1568,883', DOT),
        line('sea', 2.500, '962,1568 992,1533 1010,1508 1029,1478 1048,1456 1087,1430 1107,1410 1125,1384 1145,1361 1184,1336 1221,1300 1259,1248 1279,1231 1320,1194 1375,1153 1414,1129 1440,1116'),
        line('teal', 2.500, '1440,1116 1490,1100 1510,1083 1530,1075 1568,1075')) +
      c2(
        line('slate', 4, '30,884 120,884 150,903 255,902 275,870 290,825 305,795 325,742 400,738 425,700 535,700', DOT),
        line('maroon', 4, '550,700 615,697 635,745 655,778 780,780', DOT),
        line('slate', 4, '850,780 1060,780 1078,828 1095,765 1110,742 1210,742 1270,698 1310,692 1330,640 1335,590 1342,530', DOT),
        line('#dcdce6', 4, '724,780 736,780'), line('#dcdce6', 4, '788,780 832,780', DOT),
        line('teal', 2.500, '0,1075 14,1075 34,1070'),
        line('sea', 2.500, '34,1070 73,1053 93,1040 131,1021 189,1000 246,993 305,974 344,952 381,938 401,917 440,892 480,877 517,855 537,846'),
        line('teal', 2.500, '537,846 560,847 580,853 613,853 650,858 672,875 710,878 730,875'),
        line('sea', 2.500, '730,875 790,857 845,845 903,834 942,838 961,823 1039,794 1096,755 1135,743 1174,725 1211,710 1231,690 1290,660 1348,630')) +
      dots('#960000', 412, [3670, 3682, 3694, 3706, 3718]) + dots('#00d200', 559, [3670, 3682, 3694, 3706, 3718]) +
      line('#ff00ff', 5, '1915,355 3723,355', '8 3.760') +
      line('purple', 6, '1909,1071 2860,525 3258,300 3570,124') +
      line('purple', 8, '2178,1438 2702,1142 2860,1049 3200,854 3720,557') +
      line('lilac', 7, '1909,1334 2215,1156 2850,795 3720,294', '7 12.600') +
      line('#f0f0f0', 3, '3588,361 3718,361', '22 9') + line('#f0f0f0', 3, '3588,512 3718,512', '22 9'),
    ticks: [['366', 172], ['364', 229], ['362', 284], ['360', 342], ['358', 399], ['354', 517], ['350', 630], ['348', 687], ['346', 744], ['344', 801], ['342', 858], ['340', 915], ['338', 970], ['336', 1029], ['334', 1084], ['332', 1143], ['330', 1200], ['328', 1257], ['326', 1314], ['324', 1371], ['322', 1428]],
    pills: [['361.67', 295, '#aaaaff', '#1e1e46', '#7878c8'], ['359.59', 354, '#ff00ff'], ['357.59', 411, '#960000'], ['356.11', 455, '#1e90f0'], ['354.15', 510, '#ffffff', '#1e1e1e', '#a0a0a0'], ['351.83', 576, '#64789b'], ['342.94', 829, '#1e90f0'], ['337.71', 979, '#af2d32'], ['333.56', 1096, '#b4b4b4', '#1e1e1e', '#787878']]
  },
  'h1-squeeze': {
    box: [1909, 1476, 1818, 217],
    draw: () => histogram(1917.500, 11.76, 1591, .5485, 6, 'c66,80,93,124,151,173,186,194,197|b191,184,178,175,173,166,160,148,148,145,137,129,115,88,69,59,44,31,18|r-2,-16,-31,-48,-60,-67,-73,-76,-82|y-78,-70,-62,-54,-48,-45,-43,-34,-24,-2|c14,25,39,47,52,75,80,80|b75,66,59,47,33,25,11|r-2,-18,-29,-42|y-40|r-45,-51,-54,-57,-57|y-48,-42,-40,-40,-38|r-40|y-34,-34,-24,-5|c19,36,50,63,71,77,82,88,91,93,96,102,104,104,112|b112,109,104,96,91,80,63,47,33,19,0|r-32,-65,-92,-117,-145,-164,-174|y-169,-155,-128,-103,-79,-57,-32,-7|c17,36,61,82,102,112,126,140|b137,134,126,115,104|c107|b104,96,85,74,63,52|c55,55|b55,52,47,39,36'),
    ticks: [['1,000', 1517], ['0', 1591], ['-1,000', 1666]], pills: [['254.349', 1570, '#0000ff']]
  },
  'h1-rsi': {
    box: [1909, 1733, 1818, 239],
    draw: () =>
      c3(
        fill(UP, '15,1222 69,1210 88,1145 145,1150 182,1172 203,1200 250,1173 315,1161 338,1177 357,1150 376,1163 414,1172 434,1205 448,1263 400,1263 330,1268 170,1268 108,1295 15,1318'),
        fill(UP, '472,1283 492,1255 510,1288 530,1298 549,1292 568,1334 588,1321 606,1343 472,1345'),
        fill(DOWN, '607,1345 700,1345 684,1353 664,1364 626,1360'),
        fill(UP, '877,1345 895,1305 914,1235 933,1268 953,1283 971,1263 990,1290 1010,1288 1029,1196 1048,1270 1068,1297 1068,1345'),
        fill(DOWN, '1087,1295 1150,1313 1200,1318 1480,1320 1530,1334 1562,1338 1548,1387 1529,1370 1510,1422 1490,1408 1451,1405 1433,1354 1375,1352 1318,1355 1299,1322 1279,1371 1240,1361 1202,1343 1184,1332 1164,1356 1145,1334 1087,1320'),
        line('pink', 1.500, '15,1275 45,1250 108,1235 145,1200 182,1184 340,1181 400,1174 470,1174 550,1170 620,1172 820,1172 900,1175 1000,1176 1030,1187 1087,1243 1164,1288 1480,1288 1568,1291'),
        line('navy', 1.500, '15,1358 90,1356 455,1353 490,1328 530,1303 560,1275 588,1265 620,1285 665,1315 720,1335 860,1341 1060,1343 1090,1347 1440,1350 1470,1354 1500,1368 1540,1386 1568,1387'),
        line('#828282', 3, '25,1312 108,1295 170,1268 330,1268 400,1263 470,1262 520,1245 568,1218 600,1220 680,1248 760,1255 960,1258 1020,1262 1090,1295 1150,1313 1200,1318 1480,1320 1530,1334 1568,1338', '8 3.760'),
        line('#828282', 1.500, '25,1345 1568,1345', '8 3.760'),
        line('violet', 2.500, '15,1277 30,1260 60,1245 108,1228 145,1192 182,1172 210,1168 260,1173 340,1170 400,1163 453,1167 480,1182 515,1222 550,1253 600,1280 650,1315 700,1337 742,1345 875,1354 914,1348 950,1325 990,1297 1060,1283 1107,1290 1164,1312 1230,1332 1300,1350 1470,1356 1500,1372 1550,1390 1568,1388'),
        runs('t 15,1222 50,1212 69,1210|o 69,1210 88,1145 108,1138 125,1150 145,1150|g 145,1150 163,1163|s 163,1163 182,1172|o 182,1172 203,1200 222,1190|g 222,1190 250,1174|o 250,1174 280,1164 315,1161|g 315,1161 338,1177 357,1150|o 357,1150 376,1163 395,1167|g 395,1167 414,1172|o 414,1172 434,1205 453,1288 472,1283|g 472,1283 492,1255|o 492,1255 510,1288 530,1298|g 530,1298 549,1292|o 549,1292 568,1334 588,1321 607,1343 626,1360 664,1364 684,1353 703,1348 722,1370|g 722,1370 741,1340 760,1332|o 760,1332 778,1353 799,1353 819,1367 838,1356|g 838,1356 857,1342|o 857,1342 875,1350|g 875,1350 895,1305 914,1235 933,1268 953,1283 971,1263 990,1290 1010,1288 1029,1196 1048,1270 1068,1297|o 1068,1297 1087,1320 1125,1335 1145,1334 1164,1356 1184,1332|g 1184,1332 1202,1343|o 1202,1343 1221,1348 1240,1361 1259,1360 1279,1371 1299,1322|g 1299,1322 1318,1355|o 1318,1355 1355,1360 1375,1352 1400,1350 1414,1359|g 1414,1359 1433,1354|s 1433,1354 1451,1405|o 1451,1405 1490,1408 1510,1422 1529,1370|g 1529,1370 1548,1387|s 1548,1387 1560,1340 1568,1305', 4)) +
      c4(
        fill(UP, '14,1310 34,1260 53,1237 113,1239 131,1273 150,1287 189,1257 228,1255 265,1234 285,1213 305,1206 324,1178 344,1203 381,1218 420,1221 440,1297 445,1304 380,1305 280,1325 130,1337 6,1337'),
        fill(DOWN, '442,1304 600,1302 650,1325 718,1338 711,1370 691,1390 672,1475 652,1493 632,1500 613,1482 595,1475 576,1485 556,1466 537,1366 517,1343 497,1323 480,1345 460,1334'),
        fill(UP, '722,1338 730,1318 788,1337 827,1307 864,1305 923,1277 942,1283 961,1222 980,1222 999,1282 1019,1268 1058,1292 1078,1283 1096,1234 1115,1262 1135,1280 1192,1283 1211,1307 1230,1244 1290,1251 1309,1268 1348,1299 1348,1320 1310,1340 1280,1363 1250,1370 1080,1368 1040,1350 1020,1340'),
        line('pink', 1.500, '0,1290 110,1290 150,1280 220,1275 290,1265 380,1228 410,1223 620,1225 980,1228 1020,1233 1050,1262 1080,1290 1250,1290 1300,1272 1348,1265'),
        line('navy', 1.500, '0,1385 540,1384 600,1375 650,1420 711,1448 1040,1449 1270,1451 1312,1415 1328,1390 1348,1374'),
        line('#828282', 3, '0,1337 130,1337 280,1325 380,1305 460,1304 600,1302 650,1325 711,1338 1020,1340 1040,1350 1080,1368 1250,1370 1280,1363 1310,1340 1352,1320', '8 3.760'),
        line('#828282', 1.500, '0,1345 1355,1345', '8 3.760'),
        line('violet', 2.500, '0,1390 30,1384 53,1370 80,1330 113,1293 131,1282 169,1272 246,1264 305,1251 370,1222 400,1215 460,1220 497,1260 576,1326 613,1390 640,1425 680,1452 711,1460 748,1420 788,1380 845,1352 903,1325 980,1297 1039,1280 1192,1278 1250,1281 1290,1268 1330,1259 1348,1263'),
        runs('s 0,1375 14,1310|g 14,1310 34,1260|s 34,1260 53,1237 73,1247 93,1247|g 93,1247 113,1239 131,1273 150,1287 169,1266 189,1257 209,1257|s 209,1257 228,1255 246,1247 265,1234|g 265,1234 285,1213 305,1206|o 305,1206 324,1178 344,1203|t 344,1203 363,1205|s 363,1205 381,1218|g 381,1218 401,1221|o 401,1221 420,1221 440,1297 460,1334 480,1345 497,1323 517,1343 537,1366 556,1466 576,1485 595,1475 613,1482 632,1500 652,1493 672,1475|g 672,1475 691,1390|s 691,1390 711,1370 730,1318 748,1322|g 748,1322 788,1337 807,1329 827,1307 864,1305 903,1290|s 903,1290 923,1277 942,1283|o 942,1285 961,1222 980,1222|g 980,1222 999,1282 1019,1268 1039,1280|o 1039,1280 1058,1292|s 1058,1292 1078,1283|g 1078,1283 1096,1234|s 1096,1234 1115,1262 1135,1280 1192,1283|o 1192,1280 1211,1307|g 1211,1307 1230,1244|s 1230,1244 1250,1246|g 1250,1246 1270,1251|s 1270,1251 1290,1251 1309,1268|o 1309,1268 1348,1299', 4),
        line('#ff00ff', 3, '128,1327 128,1295'), fill('#ff00ff', '128,1282 140,1305 116,1305')),
    ticks: [['80', 1785], ['40', 1912]], pills: [['58.284', 1852, '#c83200']]
  }
};

const times = {
  m15: { x: 1, w: 1792, marks: '45:15 108:Fri 171:10 233:11 296:12 359:13 421:14 524:Mon 594:10 656:11 719:12 782:13 845:14 928:Tue 986:10 1047:11 1110:12 1173:13 1236:14 1339:Wed 1409:10 1470:11 1533:12 1596:13 1660:14 1742:Thu' },
  day: { x: 5, w: 1793, marks: '47:1/5 117:1/12 196:1/19 293:2/2 357:2/9 427:2/16 539:3/2 604:3/9 673:3/16 752:3/23 830:3/30 900:4/6 971:4/13 1107:5/4 1178:5/11 1255:5/18 1353:6/1 1420:6/8 1489:6/15 1631:6/29 1703:7/6 1774:7/13' },
  h1: { x: 1909, w: 1818, marks: '1966:Mon 2046:Tue 2133:Wed 2210:Thu 2294:Mon 2374:Tue 2461:Wed 2539:Thu 2617:Fri 2707:Mon 2786:Tue 2874:Wed 2950:Thu 3036:Mon 3115:Tue 3202:Wed 3280:Thu 3358:Fri 3448:Mon 3526:Tue 3614:Wed 3691:Thu' }
};

const fractions = cols => cols.split(' ').map(c => `minmax(0, ${c}fr)`).join(' ');

// ---- elements --------------------------------------------------------

class ChartWindow extends HTMLElement {
  constructor() {
    super();
    const full = this.hasAttribute('full');
    this.attachShadow({ mode: 'open' }).innerHTML = `
    <style>
    :host { display: block; min-width: 0; position: relative; box-sizing: border-box; background: #ececec; border-left: 1px solid #a0a0a0; }
    .title { height: 14px; background: var(--title); }
    :host(.h1) .title { height: 13px; }
    .tabs { display: flex; height: 37px; background: #b4b4b4; border-bottom: 3px solid #e4e4e4; box-sizing: content-box; }
    .tabs > * { display: flex; align-items: center; border-right: 1px solid #a0a0a0; box-sizing: border-box; }
    .tabs .space { flex: 1; }
    .tabs .tab { width: 120px; padding-left: 2px; }
    button { font: 19px "Liberation Sans", Arial, sans-serif; color: #1e1e1e; border: 0; background: none; padding: 0; position: relative; }
    .tab button { display: flex; align-items: center; gap: 9px; width: 111px; height: 26px; padding-left: 11px; border-radius: 6px; background: #fcfcfc; }
    .group { width: 72px; justify-content: center; }
    .flag { width: 97px; padding-left: 15px; }
    .flag i { width: 40px; height: 24px; border: 2px solid #1e5a91; }
    .pin { width: 60px; justify-content: center; }
    .menu { width: 61px; justify-content: center; }
    .more::after { content: ""; position: absolute; right: 7px; bottom: 4px; border: 4px solid transparent; border-right-color: #111; border-bottom-color: #111; }
    .tabs .more { position: relative; }
    :host(.h1) .menu { width: 31px; justify-content: flex-start; padding-left: 20px; overflow: hidden; }
    :host(.h1) .menu svg { flex: none; }
    :host(.h1) .menu::after { display: none; }
    .under { height: 9px; background: #98a9c9; }
    </style>
    ${full ? `<div class="title"></div>
    <div class="tabs">
      <div class="tab"><button>${icons.bars}Charts</button></div><div class="space"></div>
      <button class="group">futures</button>
      <button class="flag more" aria-label="Link colour"><i></i></button>
      <button class="pin" aria-label="Pin">${icons.pin}</button>
      <button class="menu more" aria-label="Menu">${icons.list}</button>
    </div>
    <slot name="bar"></slot>` : '<div class="under"></div>'}
    <slot></slot>`;
  }
}

class QuoteBar extends HTMLElement {
  constructor() {
    super();
    this.attachShadow({ mode: 'open' }).innerHTML = `
    <style>
    :host { display: block; border-bottom: 2px solid #c8c8c8; }
    .bar { display: grid; grid-template-columns: ${fractions(this.getAttribute('cols'))}; height: 38px; background: var(--tint); overflow: hidden; }
    .bar > * { box-sizing: border-box; display: flex; align-items: center; white-space: nowrap; border: 0; border-right: 1px solid var(--line); background: none; }
    button, input { font: 19px "Liberation Sans", Arial, sans-serif; color: #1e1e1e; }
    button { padding: 0 0 0 17px; gap: 10px; position: relative; }
    svg { flex: none; }
    .symbol { gap: 8px; }
    .combo { display: flex; box-sizing: border-box; width: 184px; height: 34px; border: 2px solid #b4b4b4; border-radius: 4px; background: #fff; }
    .combo input { flex: 1; min-width: 0; border: 0; padding: 0 10px; color: #555; outline: 0; background: none; }
    .combo button { width: 31px; margin: 1px; padding: 0; border: 0; border-radius: 4px; background: #b4b4b4; justify-content: center; display: flex; align-items: center; }
    .combo button::before { content: ""; border: 6px solid transparent; border-top: 8px solid #222; border-bottom: 0; }
    .link { width: 17px; height: 23px; padding: 0; border-radius: 4px; background: #b42d32; color: #fff; font-weight: bold; justify-content: center; display: flex; align-items: center; border: 0; }
    .name { padding-left: 20px; }
    .name, .exto { font-size: 19px; }
    .last { padding-left: 11px; font-size: 24px; font-weight: bold; color: #cd1e28; }
    .bar > .pair { flex-direction: column; align-items: flex-start; justify-content: center; padding-left: 10px; font-size: 16px; line-height: 17px; color: #28cd28; }
    .pair .bid { color: #cd2828; }
    .exto { padding-left: 11px; color: #8214b4; }
    .bar > .interval { font-weight: bold; padding: 0; justify-content: center; }
    .more::after { content: ""; position: absolute; right: 4px; bottom: 3px; border: 4px solid transparent; border-right-color: #111; border-bottom-color: #111; }
    </style>
    <div class="bar">
      <div class="symbol"><div class="combo"><input value="AXP" aria-label="Symbol"><button aria-label="Symbol list"></button></div><button class="link">1</button></div>
      <div class="name">AMERICAN EXPRESS CO</div>
      <div class="last">358.44</div>
      <div class="pair"><span>+3.38</span><span>+0.95%</span></div>
      <div class="pair"><span class="bid">B: 355.57</span><span>A: 363.25</span></div>
      <div class="exto">EXTO Eligible</div>
      <div></div>
      <button>${icons.share}Share</button>
      <button aria-label="Info">${icons.info}</button>
      <button aria-label="Edit studies">${icons.flask}</button>
      <button aria-label="Settings">${icons.gear}</button>
      <button class="interval more">${this.getAttribute('interval')}</button>
      <button class="more">${icons.style}Style</button>
      <button class="more">${icons.cursor}Drawings</button>
      <button class="more">${icons.flask}Studies</button>
      <button class="more">${icons.pattern}Patterns</button>
      <button class="more" aria-label="More">${icons.list}</button>
    </div>`;
  }
}

class StudyHead extends HTMLElement {
  constructor() {
    super();
    this.attachShadow({ mode: 'open' }).innerHTML = `
    <style>
    :host { display: grid; grid-template-columns: minmax(0, 1fr) var(--axis); }
    :host([gap]) { border-top: 7px solid #e2e2e2; }
    :host([shade]) { background: linear-gradient(#c8c8c8, #e6e6e6); --head: transparent; }
    .cells { display: grid; grid-template-columns: ${fractions(this.getAttribute('cols'))}; height: 33px; box-sizing: border-box; background: var(--head, #f8f8f8); border: 1px solid #c3c3c3; border-width: 1px 0; }
    :host([tall]) .cells { height: 34px; }
    ::slotted(*) { box-sizing: border-box; padding-left: 5px; line-height: 32px; white-space: nowrap; overflow: hidden; border-right: 1px solid #c3c3c3; font-size: 19px; }
    .side { background: var(--head, #f8f8f8); padding: 1px 0 0 9px; box-sizing: border-box; overflow: hidden; height: 100%; }
    .side svg { display: block; }
    </style>
    <div class="cells"><slot></slot></div>
    <div class="side">${this.hasAttribute('tall') ? icons.wave : ''}</div>`;
  }
}

class StudyTag extends HTMLElement {
  constructor() {
    super();
    this.attachShadow({ mode: 'open' }).innerHTML = `
    <style>
    :host { display: block; height: 31px; padding: 0 3px; background: ${this.getAttribute('color')}; color: #000; font: bold 20px/34px "Liberation Sans", Arial, sans-serif; white-space: nowrap; }
    :host([slot=end]) { font-size: 19px; padding: 0 5px; }
    :host([slot=foot]) { line-height: 38px; padding: 0 1px; }
    </style>
    <slot></slot>`;
  }
}

class PlotPane extends HTMLElement {
  constructor() {
    super();
    const { box, draw, ticks, pills } = panes[this.getAttribute('name')];
    const [, top, , height] = box;
    const pill = ([text, y, bg, ink = '#fff', edge = bg]) => `
      <rect x="6" y="${y - top - 11}" width="${text.length * 11 - (text.includes(',') ? 6 : 0) + (text.includes('.') ? 3 : 8)}" height="23" rx="4" fill="${bg}" stroke="${edge}"/>
      <text x="9" y="${y - top + 7}" fill="${ink}">${text}</text>`;
    this.attachShadow({ mode: 'open' }).innerHTML = `
    <style>
    :host { display: grid; grid-template-columns: minmax(0, 1fr) var(--axis); height: ${height}px; }
    .plot { display: grid; grid-template: 1fr / 1fr; min-width: 0; height: ${height}px; background: #000; overflow: hidden; }
    .plot > * { grid-area: 1 / 1; }
    .plot svg { width: 100%; height: ${height}px; display: block; }
    polyline { fill: none; vector-effect: non-scaling-stroke; }
    .tags { display: flex; gap: 2px; padding: 4px 2px 0 5px; align-self: start; justify-self: start; z-index: 1; }
    .tags.end { gap: 6px; justify-self: end; }
    .foot { align-self: end; justify-self: end; padding-right: 1px; z-index: 1; }
    .axis { width: 100%; height: ${height}px; background: #f8f8f8; border-left: 1px solid #999; box-sizing: border-box; font: 19px "Liberation Sans", Arial, sans-serif; }
    </style>
    <div class="plot">
      <svg viewBox="${box.join(' ')}" preserveAspectRatio="none">${draw()}</svg>
      <div class="tags"><slot name="start"></slot></div>
      <div class="tags end"><slot name="end"></slot></div>
      <div class="foot"><slot name="foot"></slot></div>
    </div>
    <svg class="axis">${ticks.map(([t, y]) => `<text x="4" y="${y - top + 7}" fill="#1e1e1e">${t}</text>`).join('')}${pills.map(pill).join('')}</svg>`;
  }
}

class TimeAxis extends HTMLElement {
  constructor() {
    super();
    const { x, w, marks } = times[this.getAttribute('name')];
    const mark = m => {
      const [at, text] = m.split(':');
      return `<text x="${((at - x) / w * 100).toFixed(2)}%" y="24">${text}</text>`;
    };
    this.attachShadow({ mode: 'open' }).innerHTML = `
    <style>
    :host { display: block; height: 34px; padding-right: var(--axis); background: #f8f8f8; }
    svg { display: block; width: 100%; height: 34px; overflow: visible; font: 19px "Liberation Sans", Arial, sans-serif; fill: #1e1e1e; text-anchor: middle; }
    </style>
    <svg>${marks.split(' ').map(mark).join('')}</svg>`;
  }
}

class ScrollStrip extends HTMLElement {
  constructor() {
    super();
    const hint = this.getAttribute('hint');
    this.attachShadow({ mode: 'open' }).innerHTML = `
    <style>
    :host { display: block; position: relative; background: #fcfcfc; }
    .strip { display: grid; grid-template-columns: ${fractions('21 110 53 256 1036 48 34 34 34 34 30 211')}; height: 32px; }
    .strip > * { display: flex; align-items: center; justify-content: center; height: 26px; min-width: 0; box-sizing: border-box; }
    button { border: 0; padding: 0; background: none; font: 19px "Liberation Sans", Arial, sans-serif; color: #1e1e1e; white-space: nowrap; }
    svg { flex: none; }
    .track { background: #eee; }
    .arrow { background: #ececec; }
    .arrow::before, .pair i { content: ""; border: 5px solid transparent; border-right: 6px solid #666; border-left: 0; }
    .strip > .expand { height: 32px; background: #b0b0b0; }
    .thumb { background: #cacaca; }
    .thumb i { height: 10px; width: 2px; border: 2px solid #888; border-width: 0 2px; }
    .strip > .pair { background: #e0e0e0; justify-content: space-evenly; }
    .pair i + i { border-right: 0; border-left: 6px solid #666; }
    .strip > .set { justify-content: flex-start; padding-left: 19px; position: relative; }
    .set::after { content: ""; position: absolute; right: 4px; bottom: 0; border: 4px solid transparent; border-right-color: #111; border-bottom-color: #111; }
    .hint { position: absolute; left: 648px; top: -14px; width: 70px; height: 46px; border: 1px solid #ddd; border-radius: 6px; background: #fafafa; box-sizing: border-box; text-align: center; font: 18px/42px "Noto Sans", sans-serif; }
    </style>
    <div class="strip">
      <button class="arrow" aria-label="Scroll left"></button><div class="track"></div>
      <button class="expand" aria-label="Expand"><svg width="16" height="22" viewBox="0 0 16 22"><path d="M1 3h14" stroke="#222" stroke-width="3"/><path d="M8 8l7 12H1z"/></svg></button>
      <div class="track"></div><div class="thumb"><i></i></div><div class="pair"><i></i><i></i></div>
      <button aria-label="Zoom out">${icons.minus}</button><button aria-label="Zoom in">${icons.plus}</button>
      <button aria-label="Fit">${icons.fit}</button><button aria-label="Crosshair">${icons.cross}</button>
      <button aria-label="Pointer">${icons.cursor}</button><button class="set">Drawing set: Default</button>
    </div>
    ${hint ? `<div class="hint">${hint}</div>` : ''}`;
  }
}

customElements.define('study-tag', StudyTag);
customElements.define('study-head', StudyHead);
customElements.define('plot-pane', PlotPane);
customElements.define('time-axis', TimeAxis);
customElements.define('scroll-strip', ScrollStrip);
customElements.define('quote-bar', QuoteBar);
customElements.define('chart-window', ChartWindow);
</script>
</body>
</html>
